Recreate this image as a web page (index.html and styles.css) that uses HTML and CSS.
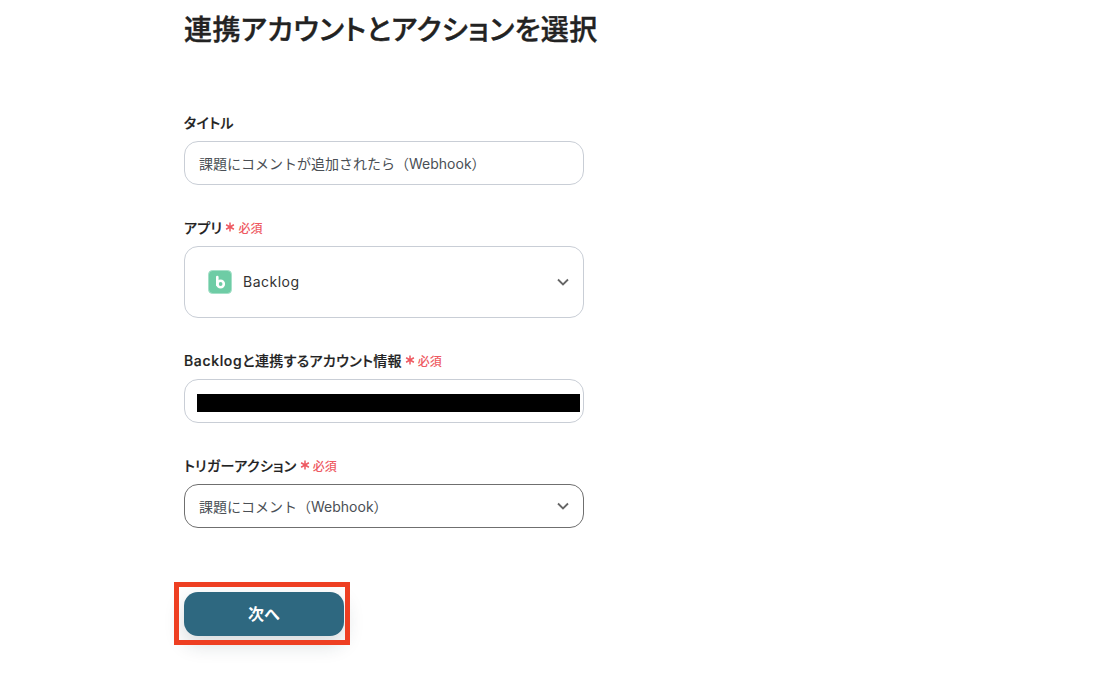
FILE: index.html
```html
<!DOCTYPE html>
<html lang="ja">
<head>
<meta charset="utf-8">
<title>連携アカウントとアクションを選択</title>
<link rel="stylesheet" href="styles.css">
</head>
<body>
<main class="page">
  <h1 class="title">連携アカウントとアクションを選択</h1>
  <form class="form">
    <div class="field field-first">
      <div class="label">タイトル</div>
      <div class="box"><span class="value">課題にコメントが追加されたら（Webhook）</span></div>
    </div>
    <div class="field">
      <div class="label">アプリ<span class="req"><svg class="ast" width="10" height="10" viewBox="0 0 10 10" aria-hidden="true"><path d="M5 .5v9M1.1 2.75l7.8 4.5M1.1 7.25l7.8-4.5" fill="none" stroke="#ee5a62" stroke-width="1.5"/></svg>必須</span></div>
      <div class="box box-app">
        <svg class="app-icon" width="24" height="24" viewBox="0 0 24 24" aria-hidden="true">
          <rect x=".5" y=".5" width="23" height="23" rx="4" fill="#6ecca5" stroke="#a5e0c8"/>
          <path d="M9.3 7v8" fill="none" stroke="#fff" stroke-width="2.6" stroke-linecap="round"/>
          <circle cx="12.6" cy="14" r="3.2" fill="none" stroke="#fff" stroke-width="2.6"/>
        </svg>
        <span class="app-name">Backlog</span>
        <svg class="chev" width="12" height="8" viewBox="0 0 12 8" aria-hidden="true"><path d="M1 1.5l5 5 5-5" fill="none" stroke="#666" stroke-width="1.8"/></svg>
      </div>
    </div>
    <div class="field">
      <div class="label"><span class="brand">Backlog</span>と連携するアカウント情報<span class="req"><svg class="ast" width="10" height="10" viewBox="0 0 10 10" aria-hidden="true"><path d="M5 .5v9M1.1 2.75l7.8 4.5M1.1 7.25l7.8-4.5" fill="none" stroke="#ee5a62" stroke-width="1.5"/></svg>必須</span></div>
      <div class="box box-redacted"><div class="redact"></div></div>
    </div>
    <div class="field">
      <div class="label">トリガーアクション<span class="req"><svg class="ast" width="10" height="10" viewBox="0 0 10 10" aria-hidden="true"><path d="M5 .5v9M1.1 2.75l7.8 4.5M1.1 7.25l7.8-4.5" fill="none" stroke="#ee5a62" stroke-width="1.5"/></svg>必須</span></div>
      <div class="box box-active">
        <span class="value">課題にコメント（Webhook）</span>
        <svg class="chev" width="12" height="8" viewBox="0 0 12 8" aria-hidden="true"><path d="M1 1.5l5 5 5-5" fill="none" stroke="#666" stroke-width="1.8"/></svg>
      </div>
    </div>
    <div class="actions">
      <button type="button" class="next">次へ</button>
      <div class="highlight"></div>
    </div>
  </form>
</main>
</body>
</html>
```
FILE: styles.css
```css
* { box-sizing: border-box; }
html, body { margin: 0; padding: 0; background: #fff; }
body {
  font-family: Inter, "Noto Sans CJK JP", sans-serif;
  color: #222;
  height: 696px;
  overflow: hidden;
}
.page { width: 400px; margin-left: 184px; }
.title {
  margin: 0;
  padding-top: 10px;
  font-size: 28px;
  line-height: 40px;
  font-weight: 500;
  letter-spacing: 0.38px;
  white-space: nowrap;
  color: #222;
  font-feature-settings: "palt";
  -webkit-text-stroke: 0.4px #222;
}
.form { display: flex; flex-direction: column; }
.field { margin-top: 32px; }
.field-first { margin-top: 62px; }
.label {
  display: flex;
  align-items: center;
  height: 20px;
  margin-bottom: 9px;
  font-size: 14px;
  font-weight: 500;
  letter-spacing: 0.35px;
  color: #222;
  font-feature-settings: "palt";
  -webkit-text-stroke: 0.2px #222;
}
.brand { letter-spacing: 0.65px; }
.req {
  display: inline-flex;
  align-items: center;
  margin-left: 3px;
  font-size: 12px;
  font-weight: 500;
  letter-spacing: 0;
  color: #ee5a62;
  -webkit-text-stroke: 0;
}
.ast { width: 10px; height: 10px; margin-right: 3px; }
.box {
  display: flex;
  align-items: center;
  height: 44px;
  padding: 0 14px;
  background: #fff;
  border: 1px solid #c9ced6;
  border-radius: 14px;
}
.value { padding-bottom: 1px; font-size: 14px; color: #4a4f55; }
.box-app { height: 72px; padding-left: 23px; }
.app-icon { flex: none; }
.app-name { margin-left: 11px; padding-bottom: 1px; font-size: 14px; letter-spacing: 0.5px; color: #333; }
.chev { margin-left: auto; flex: none; }
.box-redacted { padding: 4px 3px 0 12px; }
.redact { width: 100%; height: 18px; background: #000; }
.box-active { border-color: #6f6f6f; }
.actions { position: relative; margin-top: 64px; width: 160px; }
.next {
  display: block;
  width: 160px;
  height: 44px;
  padding: 0 0 2px;
  border: 0;
  border-radius: 14px;
  background: #2e6880;
  color: #fff;
  font: 700 16px Inter, "Noto Sans CJK JP", sans-serif;
  box-shadow: 0 8px 20px rgba(30, 50, 60, 0.18);
}
.highlight {
  position: absolute;
  left: -10px;
  top: -10px;
  width: 176px;
  height: 63px;
  border: 5px solid #ee3f22;
}
```
